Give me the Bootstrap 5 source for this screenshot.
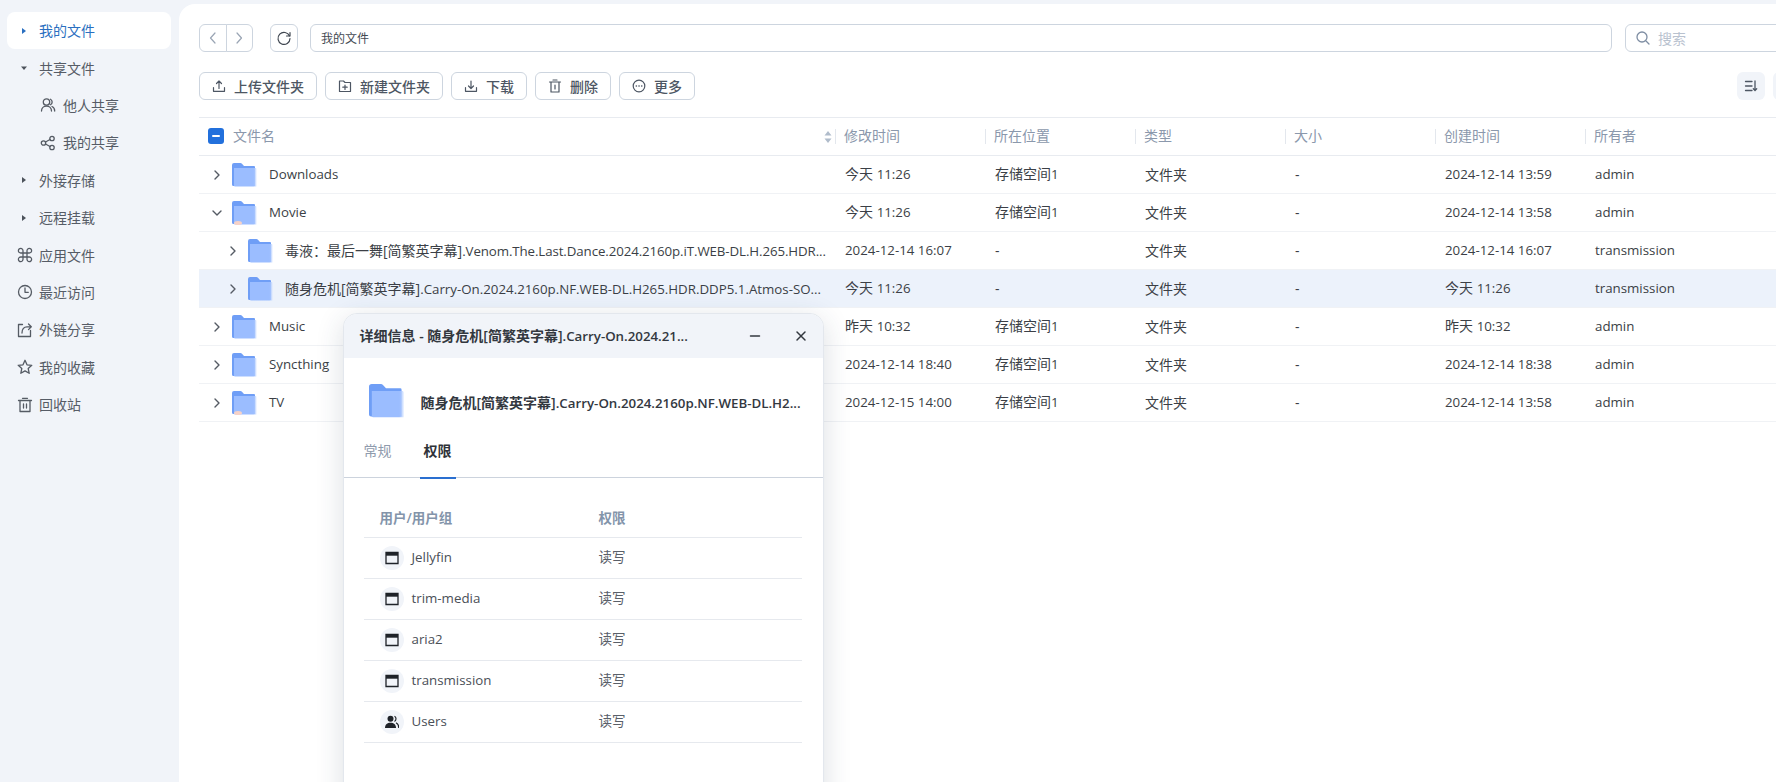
<!DOCTYPE html>
<html lang="zh-CN">
<head>
<meta charset="utf-8">
<title>我的文件</title>
<link rel="stylesheet" href="https://cdn.jsdelivr.net/npm/bootstrap@5.3.0/dist/css/bootstrap.min.css">
<style>
html,body{height:100%;overflow:hidden;background:#f1f4f9}
body{font-family:"Open Sans","Noto Sans CJK SC",sans-serif;font-size:14px;color:#3b3f46}
.lt{font-size:13.3px}
.tight{letter-spacing:-.1px}
.fm-app{width:1825px;height:782px;overflow:hidden}
.fm-side{width:179px;flex:none;padding:12px 8px 0 7px}
.side-item{height:37.4px;display:flex;align-items:center;color:#565c66;padding-left:32px;position:relative;border-radius:8px;text-decoration:none;font-size:14px}
.side-item.on{background:#fff;color:#2a6fc0;height:37px;margin-bottom:.4px}
.side-item.sub{padding-left:56px}
.side-item svg.ic{position:absolute;left:10px;top:50%;margin-top:-8px;width:16px;height:16px;fill:none;stroke:#555b64;stroke-width:1.3;stroke-linecap:round;stroke-linejoin:round}
.side-item.sub svg.ic{left:33px}
.side-item .tri{position:absolute;left:12px;top:50%;margin-top:-5px;width:10px;height:10px;fill:#4c525b}
.side-item.on .tri{fill:#2a6fc0}
.fm-main{flex:1;background:#fff;margin-top:4px;border-top-left-radius:16px;padding:20px 24px 0 20px;position:relative;min-width:0}
.bar-h{height:28px}
.tbtn{--bs-btn-padding-y:0;--bs-btn-padding-x:12px;--bs-btn-font-size:14px;--bs-btn-font-weight:500;--bs-btn-color:#4d5663;--bs-btn-border-color:#cdd5df;--bs-btn-border-radius:6px;--bs-btn-hover-bg:#f1f4f9;--bs-btn-hover-border-color:#cdd5df;--bs-btn-hover-color:#4d5663;height:28px;display:inline-flex;align-items:center;gap:8px;background:#fff;white-space:nowrap}
.tbtn svg{width:14px;height:14px;fill:none;stroke:#4d5663;stroke-width:1.2;stroke-linecap:round;stroke-linejoin:round}
.nbtn{--bs-btn-padding-x:0;width:27.5px;justify-content:center}
.nbtn svg{stroke:#9aa5b4}
.sq{--bs-btn-padding-x:0;width:28px;justify-content:center}
.sq svg{width:16px;height:16px;stroke:#3f4650}
.gap16{margin-left:17px}.gap12{margin-left:12px}.gap13{margin-left:13px}
.pathbox{flex:1;height:28px;min-height:28px;border:1px solid #cdd5df;border-radius:6px;font-size:12px;padding:0 10px;color:#444a53;font-family:inherit}
.srch{width:176px;flex:none;height:28px;border:1px solid #cdd5df;border-radius:6px;display:flex;align-items:center;padding-left:10px;gap:8px}
.srch svg{width:14px;height:14px;fill:none;stroke:#7f8ea3;stroke-width:1.3;stroke-linecap:round;flex:none}
.srch input{border:0;outline:0;width:100px;font-size:14px;padding:0;font-family:inherit;background:transparent}
.srch input::placeholder{color:#b9c2cf}
.act-row{margin-top:20px;margin-bottom:17px}
.view-btn{width:28px;height:28px;border-radius:6px;background:#f1f4f9;display:flex;align-items:center;justify-content:center;border:0;padding:0}
.view-btn svg{width:14px;height:14px;fill:none;stroke:#4d5663;stroke-width:1.3;stroke-linecap:round}
.fm-tbl.table{table-layout:fixed;width:100%;margin:0;--bs-table-bg:transparent;border-collapse:collapse;font-size:14px;color:#3b3f46}
.fm-tbl.table>thead>tr>th{height:38px;padding:0 0 2px 8px;font-weight:400;color:#8b98ac;border-top:1px solid #e8ebf0;border-bottom:1px solid #e8ebf0;vertical-align:middle;position:relative}
.fm-tbl.table>thead>tr>th+th:before{content:"";position:absolute;left:-1px;top:11px;height:15px;width:1px;background:#e3e7ed}
.fm-tbl.table>tbody>tr>td{height:38px;padding:0 0 0 9px;border-bottom:1px solid #f0f2f5;vertical-align:middle;white-space:nowrap;overflow:hidden;color:#3b3f46}
.fm-tbl.table>tbody>tr>td:not(.lt):not(:first-child){padding-bottom:1px}
.fm-tbl.table>tbody>tr>td:first-child{padding-left:0}
.fm-tbl.table>thead>tr>th:first-child{padding-left:9px}
.row-sel{--bs-table-bg:#ecf2fb}
.cb-ind{width:16px;height:16px;background:#2270dc;border-radius:3px;display:flex;align-items:center;justify-content:center;flex:none;margin-right:1px}
.cb-ind i{display:block;width:8px;height:2px;background:#fff;border-radius:1px}
.namecell{display:flex;align-items:center;height:37px;padding-left:13px}
.namecell.lv2{padding-left:29px}
.chev{width:10px;height:10px;fill:none;stroke:#555b64;stroke-width:1.4;stroke-linecap:round;stroke-linejoin:round;flex:none}
.fold{width:26px;height:24px;margin-left:9px;margin-right:12px;flex:none}
.sort-ic{position:absolute;right:4px;top:12px;width:8px;height:14px;fill:#b0bccb}
/* dialog */
.fm-dlg{position:absolute;left:163.5px;top:309px;width:481px;height:520px;background:#fff;border:1px solid #e3e7ed;border-radius:14px;box-shadow:0 6px 28px rgba(40,55,80,.16);overflow:hidden}
.dlg-head{height:44px;background:#f1f4f9;padding-left:16px;padding-right:16px;font-weight:600;font-size:14px;color:#33383f}
.dlg-head svg{width:12px;height:12px;fill:none;stroke:#33383f;stroke-width:1.5;stroke-linecap:round}
.dlg-head .sp{margin-left:auto;margin-right:34px}
.dlg-file{padding:26px 0 0 22px;height:82px}
.dlg-file svg{width:40px;height:34px;flex:none}
.dlg-file span.nm{margin-left:15px;font-weight:600;color:#33383f}
.dlg-tabs{height:39px;border-bottom:1px solid #ccd3dd;--bs-nav-link-padding-x:0;--bs-nav-link-padding-y:0;padding-left:20px;gap:32px;align-items:flex-start;margin-top:-1px}
.dlg-tabs .nav-link{color:#8f9bad;height:39px;width:28px;text-align:center;font-size:14px;line-height:24px;position:relative}
.dlg-tabs .nav-link.active{color:#2f3339;font-weight:600}
.dlg-tabs .nav-link.active:after{content:"";position:absolute;left:-4px;right:-4px;bottom:-1px;height:2px;background:#2a6fd0}
.pm-wrap{padding:20px 21px 0 20px}
.pm-tbl.table{margin:0;--bs-table-bg:transparent;table-layout:fixed}
.pm-tbl.table>thead>tr>th{height:39px;padding:2px 0 0 16px;border-bottom:1px solid #e6e9ee;font-weight:600;color:#8394aa;font-size:13.5px;vertical-align:middle}
.pm-tbl.table>tbody>tr>td{height:41px;padding:0 0 0 16px;border-bottom:1px solid #e6e9ee;vertical-align:middle;color:#4a4f57;font-size:13.3px}
.pm-tbl.table>tbody>tr>td.pv{font-size:13.5px;color:#5a6069}
.uic{width:24px;height:24px;border-radius:50%;background:#f1f4f9;display:flex;align-items:center;justify-content:center;margin-right:8px;flex:none}
.uic svg{width:14px;height:14px}
</style>
</head>
<body>
<svg width="0" height="0" class="position-absolute" aria-hidden="true">
<defs>
<linearGradient id="fg" x1="0" x2="1" y1="0" y2="0"><stop offset="0" stop-color="#9bbdff"/><stop offset=".86" stop-color="#9bbdff"/><stop offset="1" stop-color="#c9dcff" stop-opacity=".6"/></linearGradient>
<symbol id="folder" viewBox="0 0 26 24">
<path d="M1 2a2 2 0 0 1 2-2h6.500a2 2 0 0 1 1.200.5L13 3h10a1 1 0 0 1 1 1v19H2.500A1.500 1.500 0 0 1 1 21.500z" fill="#6f9ef6"/>
<path d="M3 5h21.500c.5 0 1 .5 1 1v17.500H4a1 1 0 0 1-1-1z" fill="url(#fg)"/>
</symbol>
<symbol id="folderx" viewBox="0 0 26 24">
<path d="M1 2a2 2 0 0 1 2-2h6.500a2 2 0 0 1 1.200.5L13 3h10a1 1 0 0 1 1 1v19H2.500A1.500 1.500 0 0 1 1 21.500z" fill="#6f9ef6"/>
<path d="M3 5h21.500c.5 0 1 .5 1 1v17.500H4a1 1 0 0 1-1-1z" fill="url(#fg)"/>
<ellipse cx="7" cy="22" rx="4" ry="2" fill="#f6d2c8"/>
</symbol>
<symbol id="win" viewBox="0 0 14 14"><path d="M1 1.500h12v11H1z" fill="none" stroke="#1f2329" stroke-width="1.300"/><path d="M1 1.500h12v3.200H1z" fill="#1f2329"/></symbol>
<symbol id="ch-r" viewBox="0 0 10 10"><path d="M3 1l4 4-4 4"/></symbol>
<symbol id="ch-d" viewBox="0 0 10 10"><path d="M1 3l4 4 4-4"/></symbol>
</defs>
</svg>

<div class="fm-app d-flex">
  <nav class="fm-side">
    <a class="side-item on" href="#"><svg class="tri" viewBox="0 0 10 10"><path d="M3 2v6l4-3z"/></svg>我的文件</a>
    <a class="side-item" href="#"><svg class="tri" viewBox="0 0 10 10"><path d="M2 3.500h6L5 7z"/></svg>共享文件</a>
    <a class="side-item sub" href="#"><svg class="ic" viewBox="0 0 16 16"><circle cx="6.500" cy="5" r="3.200"/><path d="M1.500 14c0-3 2.200-5 5-5s5 2 5 5M10.500 2.200a3.200 3.200 0 0 1 0 5.600M12 9.500c1.600.7 2.700 2.300 2.700 4.500"/></svg>他人共享</a>
    <a class="side-item sub" href="#"><svg class="ic" viewBox="0 0 16 16"><circle cx="3.500" cy="8" r="2.200"/><circle cx="12" cy="3.500" r="2.200"/><circle cx="12" cy="12.500" r="2.200"/><path d="M5.500 7l4.500-2.500M5.500 9l4.500 2.500"/></svg>我的共享</a>
    <a class="side-item" href="#"><svg class="tri" viewBox="0 0 10 10"><path d="M3 2v6l4-3z"/></svg>外接存储</a>
    <a class="side-item" href="#"><svg class="tri" viewBox="0 0 10 10"><path d="M3 2v6l4-3z"/></svg>远程挂载</a>
    <a class="side-item" href="#"><svg class="ic" viewBox="0 0 16 16"><path d="M6 6h4v4H6zM6 6H3.800A2.300 2.300 0 1 1 6 3.800zM10 6V3.800A2.300 2.300 0 1 1 12.200 6zM10 10h2.200A2.300 2.300 0 1 1 10 12.200zM6 10v2.200A2.300 2.300 0 1 1 3.800 10z"/></svg>应用文件</a>
    <a class="side-item" href="#"><svg class="ic" viewBox="0 0 16 16"><circle cx="8" cy="8" r="6.500"/><path d="M8 4v4.300h3.300"/></svg>最近访问</a>
    <a class="side-item" href="#"><svg class="ic" viewBox="0 0 16 16"><path d="M5.500 2.500H1.500v12h12v-6"/><path d="M5 11c0-4 2-6.200 5-6.200h4M11.500 2l2.800 2.800-2.800 2.800"/></svg>外链分享</a>
    <a class="side-item" href="#"><svg class="ic" viewBox="0 0 16 16"><path d="M8 1.300l2 4.500 4.800.5-3.600 3.200 1 4.800L8 11.900l-4.200 2.400 1-4.800L1.200 6.300 6 5.800z"/></svg>我的收藏</a>
    <a class="side-item" href="#"><svg class="ic" viewBox="0 0 16 16"><path d="M1.500 3.500h13M5.500 1.300h5M3 3.500v11h10v-11M6.500 7v4M9.500 7v4"/></svg>回收站</a>
  </nav>

  <main class="fm-main">
    <div class="d-flex bar-h">
      <div class="btn-group flex-none">
        <button class="btn tbtn nbtn" type="button"><svg viewBox="0 0 14 14"><path d="M9 2L4.500 7 9 12"/></svg></button>
        <button class="btn tbtn nbtn" type="button"><svg viewBox="0 0 14 14"><path d="M5 2l4.500 5L5 12"/></svg></button>
      </div>
      <button class="btn tbtn sq gap16" type="button"><svg viewBox="0 0 16 16"><path d="M13.500 6A6 6 0 1 0 14 8.500"/><path d="M14 2.500V6h-3.500" stroke-width="1.200"/></svg></button>
      <input class="form-control pathbox gap12" type="text" value="我的文件" readonly aria-label="路径">
      <div class="srch gap13"><svg viewBox="0 0 14 14"><circle cx="6" cy="6" r="5"/><path d="M10 10l3 3"/></svg><input type="text" placeholder="搜索" aria-label="搜索"></div>
    </div>

    <div class="d-flex bar-h act-row">
      <div class="d-flex gap-2">
        <button class="btn tbtn" type="button"><svg viewBox="0 0 14 14"><path d="M1.500 8.500v3.800h11V8.500M7 9.500V2M4.500 4.500L7 2l2.500 2.500"/></svg>上传文件夹</button>
        <button class="btn tbtn" type="button"><svg viewBox="0 0 14 14"><path d="M1.500 2h4l1.500 1.500h5.500v9h-11zM7 6v4.500M4.800 8.200h4.400"/></svg>新建文件夹</button>
        <button class="btn tbtn" type="button"><svg viewBox="0 0 14 14"><path d="M1.500 8.500v3.800h11V8.500M7 2v7.500M4.500 7L7 9.500 9.500 7"/></svg>下载</button>
        <button class="btn tbtn" type="button"><svg viewBox="0 0 14 14"><path d="M1.500 3h11M5 1h4M3 3v10h8V3M7 6v4"/></svg>删除</button>
        <button class="btn tbtn" type="button"><svg viewBox="0 0 14 14"><circle cx="7" cy="7" r="5.800"/><path d="M4.300 7h.1M7 7h.1M9.700 7h.1" stroke-width="1.600"/></svg>更多</button>
      </div>
      <div class="ms-auto d-flex gap-2">
        <button class="view-btn" type="button" aria-label="排序"><svg viewBox="0 0 14 14"><path d="M1.500 2.500h6.500M1.500 7h6.500M1.500 11.500h6.500M11 2v9.500M9.300 9.800L11 11.500l1.700-1.700"/></svg></button>
        <button class="view-btn" type="button" aria-label="视图"><svg viewBox="0 0 14 14"><path d="M2 3h10M2 7h10M2 11h10"/></svg></button>
      </div>
    </div>

    <table class="table fm-tbl">
      <colgroup><col style="width:637px"><col style="width:150px"><col style="width:150px"><col style="width:150px"><col style="width:150px"><col style="width:150px"><col></colgroup>
      <thead>
        <tr>
          <th><div class="d-flex align-items-center gap-2"><span class="cb-ind" role="checkbox" aria-checked="mixed"><i></i></span><span>文件名</span></div><svg class="sort-ic" viewBox="0 0 8 14"><path d="M4 1l3.500 4.500h-7zM4 13L.5 8.500h7z"/></svg></th>
          <th>修改时间</th><th>所在位置</th><th>类型</th><th>大小</th><th>创建时间</th><th>所有者</th>
        </tr>
      </thead>
      <tbody>
        <tr>
          <td><div class="namecell"><svg class="chev"><use href="#ch-r"/></svg><svg class="fold"><use href="#folder"/></svg><span class="lt">Downloads</span></div></td>
          <td>今天 <span class="lt">11:26</span></td><td>存储空间<span class="lt">1</span></td><td>文件夹</td><td>-</td><td class="lt">2024-12-14 13:59</td><td class="lt">admin</td>
        </tr>
        <tr>
          <td><div class="namecell"><svg class="chev"><use href="#ch-d"/></svg><svg class="fold"><use href="#folderx"/></svg><span class="lt">Movie</span></div></td>
          <td>今天 <span class="lt">11:26</span></td><td>存储空间<span class="lt">1</span></td><td>文件夹</td><td>-</td><td class="lt">2024-12-14 13:58</td><td class="lt">admin</td>
        </tr>
        <tr>
          <td><div class="namecell lv2"><svg class="chev"><use href="#ch-r"/></svg><svg class="fold"><use href="#folder"/></svg><span>毒液：最后一舞[简繁英字幕]<span class="lt tight">.Venom.The.Last.Dance.2024.2160p.iT.WEB-DL.H.265.HDR...</span></span></div></td>
          <td class="lt">2024-12-14 16:07</td><td>-</td><td>文件夹</td><td>-</td><td class="lt">2024-12-14 16:07</td><td class="lt">transmission</td>
        </tr>
        <tr class="row-sel">
          <td><div class="namecell lv2"><svg class="chev"><use href="#ch-r"/></svg><svg class="fold"><use href="#folder"/></svg><span>随身危机[简繁英字幕]<span class="lt">.Carry-On.2024.2160p.NF.WEB-DL.H265.HDR.DDP5.1.Atmos-SO...</span></span></div></td>
          <td>今天 <span class="lt">11:26</span></td><td>-</td><td>文件夹</td><td>-</td><td>今天 <span class="lt">11:26</span></td><td class="lt">transmission</td>
        </tr>
        <tr>
          <td><div class="namecell"><svg class="chev"><use href="#ch-r"/></svg><svg class="fold"><use href="#folder"/></svg><span class="lt">Music</span></div></td>
          <td>昨天 <span class="lt">10:32</span></td><td>存储空间<span class="lt">1</span></td><td>文件夹</td><td>-</td><td>昨天 <span class="lt">10:32</span></td><td class="lt">admin</td>
        </tr>
        <tr>
          <td><div class="namecell"><svg class="chev"><use href="#ch-r"/></svg><svg class="fold"><use href="#folder"/></svg><span class="lt">Syncthing</span></div></td>
          <td class="lt">2024-12-14 18:40</td><td>存储空间<span class="lt">1</span></td><td>文件夹</td><td>-</td><td class="lt">2024-12-14 18:38</td><td class="lt">admin</td>
        </tr>
        <tr>
          <td><div class="namecell"><svg class="chev"><use href="#ch-r"/></svg><svg class="fold"><use href="#folderx"/></svg><span class="lt">TV</span></div></td>
          <td class="lt">2024-12-15 14:00</td><td>存储空间<span class="lt">1</span></td><td>文件夹</td><td>-</td><td class="lt">2024-12-14 13:58</td><td class="lt">admin</td>
        </tr>
      </tbody>
    </table>

    <section class="fm-dlg">
      <div class="dlg-head d-flex align-items-center">
        <span>详细信息 - 随身危机[简繁英字幕]<span class="lt">.Carry-On.2024.21...</span></span>
        <svg class="sp" viewBox="0 0 12 12"><path d="M1.500 6h9"/></svg>
        <svg viewBox="0 0 12 12"><path d="M2 2l8 8M10 2l-8 8"/></svg>
      </div>
      <div class="dlg-file d-flex align-items-start">
        <svg><use href="#folder"/></svg>
        <span class="nm mt-2">随身危机[简繁英字幕]<span class="lt">.Carry-On.2024.2160p.NF.WEB-DL.H2...</span></span>
      </div>
      <ul class="nav dlg-tabs">
        <li class="nav-item"><a class="nav-link" href="#">常规</a></li>
        <li class="nav-item"><a class="nav-link active" href="#">权限</a></li>
      </ul>
      <div class="pm-wrap">
        <table class="table pm-tbl">
          <colgroup><col style="width:219px"><col></colgroup>
          <thead><tr><th>用户/用户组</th><th>权限</th></tr></thead>
          <tbody>
            <tr><td><div class="d-flex align-items-center"><span class="uic"><svg><use href="#win"/></svg></span>Jellyfin</div></td><td class="pv">读写</td></tr>
            <tr><td><div class="d-flex align-items-center"><span class="uic"><svg><use href="#win"/></svg></span>trim-media</div></td><td class="pv">读写</td></tr>
            <tr><td><div class="d-flex align-items-center"><span class="uic"><svg><use href="#win"/></svg></span>aria2</div></td><td class="pv">读写</td></tr>
            <tr><td><div class="d-flex align-items-center"><span class="uic"><svg><use href="#win"/></svg></span>transmission</div></td><td class="pv">读写</td></tr>
            <tr><td><div class="d-flex align-items-center"><span class="uic"><svg viewBox="0 0 14 14"><circle cx="5.500" cy="3.800" r="3" fill="#1f2329"/><path d="M0 13c0-3.500 2.300-5.300 5.500-5.300S11 9.500 11 13z" fill="#1f2329"/><path d="M9.500 1.200a3 3 0 0 1 0 5.200M11 7.800c1.800.8 2.800 2.500 2.800 5.200" fill="none" stroke="#1f2329" stroke-width="1.200"/></svg></span>Users</div></td><td class="pv">读写</td></tr>
          </tbody>
        </table>
      </div>
    </section>
  </main>
</div>
<script src="https://cdn.jsdelivr.net/npm/bootstrap@5.3.0/dist/js/bootstrap.bundle.min.js"></script>
</body>
</html>
